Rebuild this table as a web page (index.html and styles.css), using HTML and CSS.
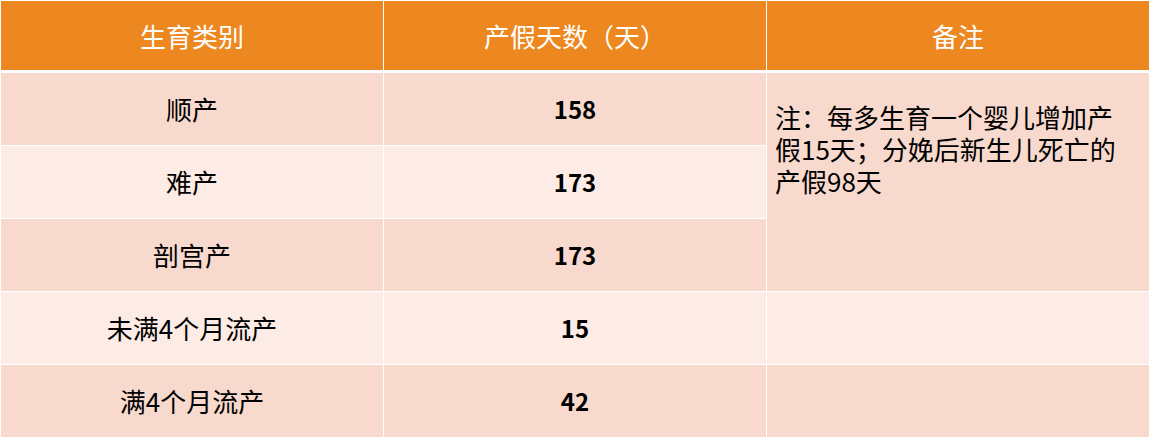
FILE: index.html
```html
<!DOCTYPE html>
<html lang="zh-CN">
<head>
<meta charset="utf-8">
<title>产假天数</title>
<link rel="stylesheet" href="styles.css">
</head>
<body>
<div class="table">
  <div class="cell head">生育类别</div>
  <div class="cell head">产假天数（天）</div>
  <div class="cell head">备注</div>

  <div class="cell dark">顺产</div>
  <div class="cell dark num">158</div>
  <div class="cell dark note">注：每多生育一个婴儿增加产假15天；分娩后新生儿死亡的产假98天</div>

  <div class="cell light">难产</div>
  <div class="cell light num">173</div>

  <div class="cell dark">剖宫产</div>
  <div class="cell dark num">173</div>

  <div class="cell light">未满4个月流产</div>
  <div class="cell light num">15</div>
  <div class="cell light"></div>

  <div class="cell dark">满4个月流产</div>
  <div class="cell dark num">42</div>
  <div class="cell dark"></div>
</div>
</body>
</html>
```

FILE: styles.css
```css
html, body {
  margin: 0;
  padding: 0;
  background: #ffffff;
}

body {
  width: 1150px;
  height: 437px;
  overflow: hidden;
  font-family: "Noto Sans CJK SC", "Noto Sans", sans-serif;
  color: #000;
}

.table {
  display: grid;
  grid-template-columns: 382px 382px 382px;
  grid-template-rows: 71px 72px 72px 72px 72px 72px;
  column-gap: 1px;
  row-gap: 1px;
  padding: 1px 1px 0 1px;
  height: 436px;
}

.cell {
  display: flex;
  align-items: center;
  justify-content: center;
  font-size: 26px;
  line-height: 32px;
}

.head {
  background: #ed8720;
  color: #ffffff;
  margin-bottom: 2px;
}

.dark {
  background: #f8d9cd;
}

.light {
  background: #fcece5;
}

.num {
  font-weight: bold;
  font-size: 24px;
}

.note {
  grid-row: span 3;
  align-items: flex-start;
  justify-content: flex-start;
  padding: 28px 20px 0 8px;
}
```
